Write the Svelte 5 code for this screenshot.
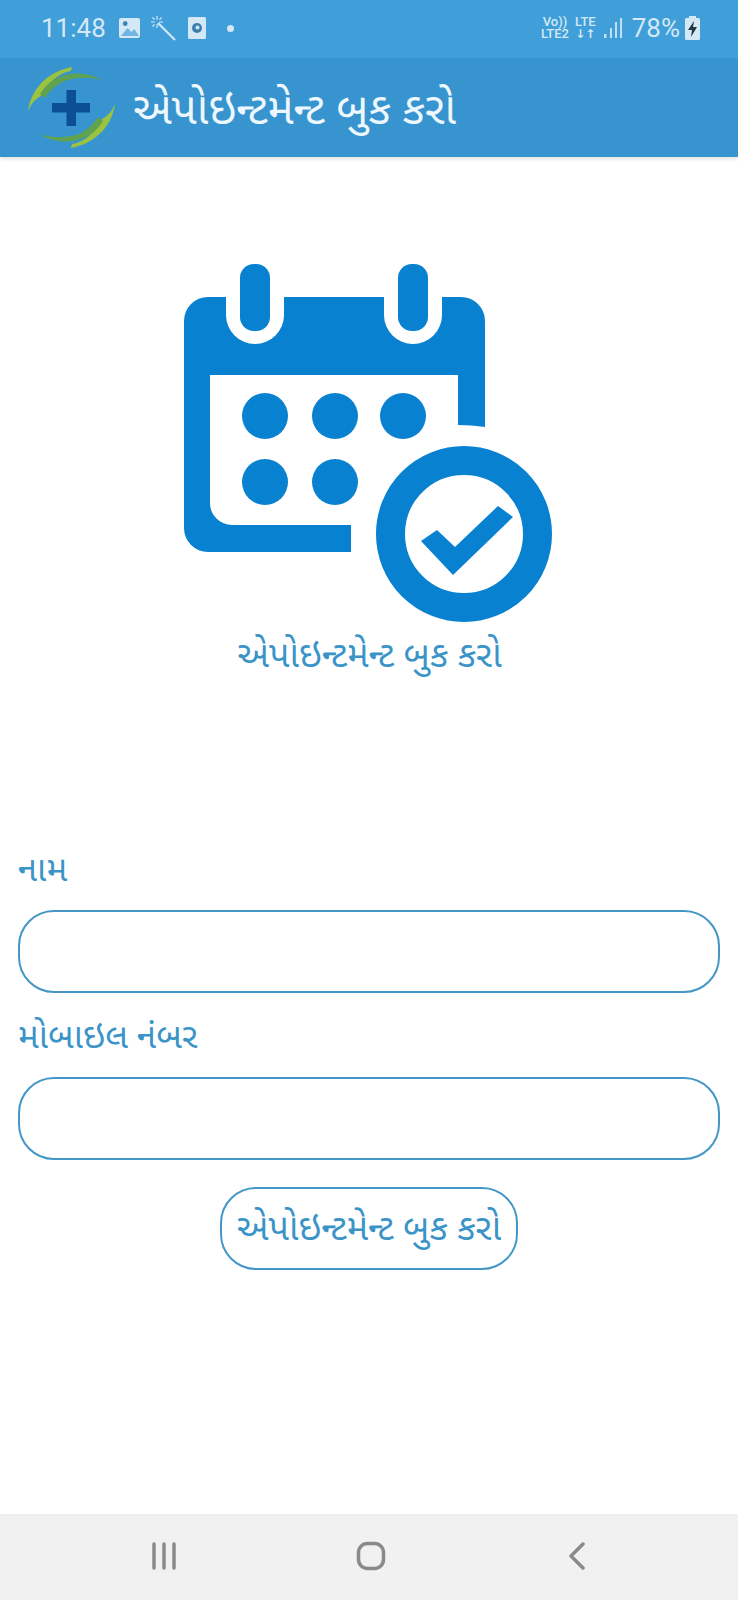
<script>
	const title = 'એપોઇન્ટમેન્ટ બુક કરો';
</script>

<div class="screen">
	<header class="top">
		<div class="status">
			<span class="time">11:48</span>
			<svg class="ico" width="21" height="20" viewBox="0 0 22 20" preserveAspectRatio="none">
				<rect width="22" height="20" rx="2" fill="#d4e8f6" />
				<path d="M2 18l7-8 4 4 3-3 5 7z" fill="#6fb6e3" />
				<circle cx="6.500" cy="5.500" r="2.500" fill="#3b86ba" />
			</svg>
			<svg class="ico wand" width="27" height="26" viewBox="0 0 27 26">
				<path d="M8 8l17 17" stroke="#d4e8f6" stroke-width="2.200" />
				<path d="M7 1v4M7 9v4M1 7h4M9 7h4M2.500 2.500l2 2M11.500 2.500l-2 2M2.500 11.500l2-2" stroke="#d4e8f6" stroke-width="1.200" />
			</svg>
			<svg class="ico clock" width="18" height="22" viewBox="0 0 18 22">
				<rect width="18" height="22" rx="1.500" fill="#d4e8f6" />
				<circle cx="9" cy="11" r="5" fill="#3b7fae" />
				<circle cx="9.500" cy="10.500" r="2" fill="#d4e8f6" />
			</svg>
			<span class="dot"></span>
			<span class="spacer"></span>
			<span class="net">
				<span>Vo))</span>
				<span>LTE2</span>
			</span>
			<span class="net lte">
				<span>LTE</span>
				<span class="arrows">↓↑</span>
			</span>
			<svg class="signal" width="20" height="22" viewBox="0 0 20 22">
				<rect x="1" y="17" width="2.500" height="4" fill="#c2dff3" />
				<rect x="7" y="11" width="2" height="10" fill="#c2dff3" />
				<rect x="12" y="5" width="2" height="16" fill="#c2dff3" />
				<rect x="17" y="1" width="2" height="20" fill="#c2dff3" />
			</svg>
			<span class="pct">78%</span>
			<svg class="batt" width="15" height="24" viewBox="0 0 15 24">
				<rect x="4" y="0" width="7" height="3" fill="#d4e8f6" />
				<rect y="2" width="15" height="22" rx="1.500" fill="#d4e8f6" />
				<path d="M9 5l-6 9h4l-1 7 6-10H8z" fill="#26343d" />
			</svg>
		</div>
		<div class="bar">
			<svg class="logo" width="88" height="84" viewBox="0 0 88 84">
				{#each [0, 180] as angle}
					<g transform="rotate({angle} 43.500 41.500)">
						<path d="M0 45C3 24 18 6 44 1l-1 4C30 7 20 17 13 30 7 33 3 38 0 45z" fill="#9cc23f" />
						<path d="M12 28C20 15 30 10 42 8 54 6 66 9 75 15 64 11 52 11 39 14 30 17 22 24 17 32z" fill="#5fa24f" />
					</g>
				{/each}
				<path d="M38.500 24h9.500v13h14v9.500H48V60h-9.500V46.500H24V37h14.500z" fill="#0d4f94" />
			</svg>
			<h1>{title}</h1>
		</div>
	</header>

	<main>
		<svg class="calendar" width="370" height="372" viewBox="184 264 370 372">
			<path
				d="M208 297h18v18a29 29 0 0 0 58 0v-18h100v18a29 29 0 0 0 58 0v-18h19a24 24 0 0 1 24 24v106q-13-2-27-2V375H210v128a22 22 0 0 0 22 22h119v27H208a24 24 0 0 1-24-24V321a24 24 0 0 1 24-24z"
				fill="#0781d0"
			/>
			<rect x="240" y="264" width="30" height="67" rx="14" fill="#0781d0" />
			<rect x="398" y="264" width="30" height="67" rx="14" fill="#0781d0" />
			<circle cx="265" cy="416" r="23" fill="#0781d0" />
			<circle cx="335" cy="416" r="23" fill="#0781d0" />
			<circle cx="403" cy="416" r="23" fill="#0781d0" />
			<circle cx="265" cy="482" r="23" fill="#0781d0" />
			<circle cx="335" cy="482" r="23" fill="#0781d0" />
			<circle cx="464" cy="534" r="73.500" fill="#fff" stroke="#0781d0" stroke-width="29" />
			<path d="M421 541l16-11 18 17 43-41 15 11-60 58z" fill="#0781d0" />
		</svg>
		<h2>{title}</h2>

		<form class="form">
			<label for="name">નામ</label>
			<input id="name" type="text" />
			<label for="mobile">મોબાઇલ નંબર</label>
			<input id="mobile" type="text" />
			<button type="button">{title}</button>
		</form>
	</main>

	<nav class="nav">
		<svg width="28" height="28" viewBox="0 0 28 28">
			<path d="M4 2v24M14 2v24M24 2v24" stroke="#8a8a8a" stroke-width="3.500" stroke-linecap="round" />
		</svg>
		<svg class="home" width="30" height="30" viewBox="0 0 30 30">
			<rect x="2.500" y="2.500" width="25" height="25" rx="9" fill="none" stroke="#8a8a8a" stroke-width="3.500" />
		</svg>
		<svg width="18" height="28" viewBox="0 0 18 28">
			<path d="M15 2L3 14l12 12" fill="none" stroke="#8a8a8a" stroke-width="3.500" stroke-linecap="round" stroke-linejoin="round" />
		</svg>
	</nav>
</div>

<style>
	:global(body) {
		margin: 0;
		background: #fff;
	}

	.screen {
		width: 738px;
		height: 1600px;
		display: flex;
		flex-direction: column;
		font-family: 'Noto Sans', 'Noto Sans Gujarati', Roboto, sans-serif;
	}

	.top {
		box-shadow: 0 2px 4px rgba(0, 0, 0, 0.12);
		z-index: 1;
	}

	.status {
		height: 58px;
		box-sizing: border-box;
		padding: 0 38px 2px 41px;
		background: #409fd9;
		display: flex;
		align-items: center;
		color: #d4e8f6;
		font-family: Roboto, sans-serif;
	}

	.time {
		font-size: 26px;
		margin-right: 13px;
	}

	.wand {
		margin-left: 10px;
	}

	.clock {
		margin-left: 11px;
	}

	.dot {
		width: 7px;
		height: 7px;
		border-radius: 50%;
		background: #d4e8f6;
		margin-left: 21px;
	}

	.spacer {
		flex: 1;
	}

	.net {
		display: flex;
		flex-direction: column;
		align-items: center;
		font-size: 13px;
		font-weight: 500;
		line-height: 12px;
	}

	.lte {
		margin-left: 6px;
	}

	.arrows {
		font-family: 'DejaVu Sans', sans-serif;
		font-size: 12px;
		font-weight: 700;
	}

	.signal {
		margin-left: 7px;
	}

	.pct {
		font-size: 26px;
		margin-left: 9px;
	}

	.batt {
		margin-left: 5px;
	}

	.bar {
		height: 99px;
		box-sizing: border-box;
		background: #3794cf;
		display: flex;
		align-items: center;
		padding: 0 0 0 28px;
	}

	.logo {
		flex: none;
	}

	h1 {
		margin: 4px 0 0 17px;
		color: #eef7fd;
		font-size: 44px;
		font-weight: 400;
	}

	main {
		flex: 1;
		display: flex;
		flex-direction: column;
	}

	.calendar {
		display: block;
		margin: 107px 0 0 184px;
	}

	h2 {
		margin: -4px 0 0;
		padding-left: 1px;
		color: #3b94c8;
		font-size: 36px;
		font-weight: 400;
		line-height: 44px;
		text-align: center;
	}

	.form {
		margin-top: 170px;
		padding: 0 18px;
		display: flex;
		flex-direction: column;
	}

	label {
		color: #3b94c8;
		font-size: 35px;
		line-height: 44px;
	}

	input {
		box-sizing: border-box;
		width: 702px;
		height: 83px;
		margin: 20px 0 20px;
		border: 2px solid #4396c6;
		border-radius: 36px;
		background: #fff;
		outline: none;
	}

	button {
		align-self: center;
		box-sizing: border-box;
		width: 298px;
		height: 83px;
		margin-top: 7px;
		padding: 0;
		border: 2px solid #4396c6;
		border-radius: 36px;
		background: #fff;
		color: #3b94c8;
		font-family: inherit;
		font-size: 36px;
	}

	.nav {
		height: 86px;
		background: #f1f1f1;
		border-top: 1px solid #eeeeee;
		box-sizing: border-box;
		display: flex;
		align-items: center;
		padding: 0 152px 4px 150px;
		justify-content: space-between;
	}

	.home {
		margin-right: 4px;
	}
</style>
